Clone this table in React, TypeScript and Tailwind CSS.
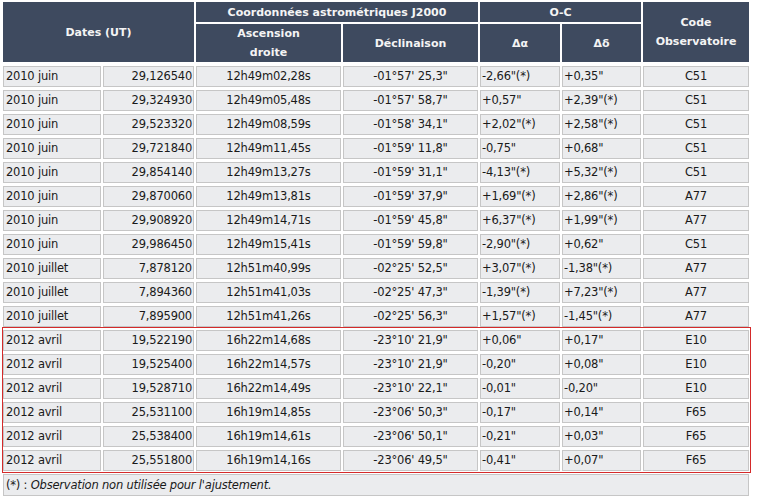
import React from "react";

const rows: string[][] = [
  ["2010 juin", "29,126540", "12h49m02,28s", "-01°57' 25,3\"", "-2,66\"(*)", "+0,35\"", "C51"],
  ["2010 juin", "29,324930", "12h49m05,48s", "-01°57' 58,7\"", "+0,57\"", "+2,39\"(*)", "C51"],
  ["2010 juin", "29,523320", "12h49m08,59s", "-01°58' 34,1\"", "+2,02\"(*)", "+2,58\"(*)", "C51"],
  ["2010 juin", "29,721840", "12h49m11,45s", "-01°59' 11,8\"", "-0,75\"", "+0,68\"", "C51"],
  ["2010 juin", "29,854140", "12h49m13,27s", "-01°59' 31,1\"", "-4,13\"(*)", "+5,32\"(*)", "C51"],
  ["2010 juin", "29,870060", "12h49m13,81s", "-01°59' 37,9\"", "+1,69\"(*)", "+2,86\"(*)", "A77"],
  ["2010 juin", "29,908920", "12h49m14,71s", "-01°59' 45,8\"", "+6,37\"(*)", "+1,99\"(*)", "A77"],
  ["2010 juin", "29,986450", "12h49m15,41s", "-01°59' 59,8\"", "-2,90\"(*)", "+0,62\"", "C51"],
  ["2010 juillet", "7,878120", "12h51m40,99s", "-02°25' 52,5\"", "+3,07\"(*)", "-1,38\"(*)", "A77"],
  ["2010 juillet", "7,894360", "12h51m41,03s", "-02°25' 47,3\"", "-1,39\"(*)", "+7,23\"(*)", "A77"],
  ["2010 juillet", "7,895900", "12h51m41,26s", "-02°25' 56,3\"", "+1,57\"(*)", "-1,45\"(*)", "A77"],
];

const rows2: string[][] = [
  ["2012 avril", "19,522190", "16h22m14,68s", "-23°10' 21,9\"", "+0,06\"", "+0,17\"", "E10"],
  ["2012 avril", "19,525400", "16h22m14,57s", "-23°10' 21,9\"", "-0,20\"", "+0,08\"", "E10"],
  ["2012 avril", "19,528710", "16h22m14,49s", "-23°10' 22,1\"", "-0,01\"", "-0,20\"", "E10"],
  ["2012 avril", "25,531100", "16h19m14,85s", "-23°06' 50,3\"", "-0,17\"", "+0,14\"", "F65"],
  ["2012 avril", "25,538400", "16h19m14,61s", "-23°06' 50,1\"", "-0,21\"", "+0,03\"", "F65"],
  ["2012 avril", "25,551800", "16h19m14,16s", "-23°06' 49,5\"", "-0,41\"", "+0,07\"", "F65"],
];

const cols = "grid grid-cols-[98px_91px_145px_135px_80px_79px_106px] gap-x-[2px]";
const cell = "h-[21px] border border-[#c6c6c6] bg-[#ebecee] text-[11.5px] leading-[19px] text-[#1a1a1a] whitespace-nowrap tracking-[-0.2px]";
const aligns = [
  "text-left pl-[2px]",
  "text-right pr-[1px]",
  "text-center",
  "text-center",
  "text-left pl-[1px]",
  "text-left pl-[1px]",
  "text-center",
];

function Row({ r }: { r: string[] }) {
  return (
    <div className={cols}>
      {r.map((v, i) => (
        <div key={i} className={`${cell} ${aligns[i]}`}>
          {v}
        </div>
      ))}
    </div>
  );
}

const hd = "bg-[#3e4a5f] text-[#f4f4f4] font-bold text-[11px] leading-[19px] flex items-center justify-center text-center";

export default function App() {
  return (
    <div
      className="bg-white w-[761px] h-[502px] pl-[3px] pt-[2px]"
      style={{ fontFamily: '"DejaVu Sans", Verdana, sans-serif' }}
    >
      <div className="w-[746px] flex flex-col">
        <div className={`${cols} grid-rows-[20px_38px] gap-y-[2px] mb-[4px]`}>
          <div className={`${hd} col-span-2 row-span-2`}>Dates (UT)</div>
          <div className={`${hd} col-span-2`}>Coordonnées astrométriques J2000</div>
          <div className={`${hd} col-span-2`}>O-C</div>
          <div className={`${hd} row-span-2`}>
            Code
            <br />
            Observatoire
          </div>
          <div className={hd}>
            Ascension
            <br />
            droite
          </div>
          <div className={hd}>Déclinaison</div>
          <div className={hd}>Δα</div>
          <div className={hd}>Δδ</div>
        </div>
        <div className="flex flex-col gap-y-[3px]">
          {rows.map((r, i) => (
            <Row key={i} r={r} />
          ))}
          <div className="-ml-px -mr-[2px] pr-px -mt-[3px] -mb-[2px] pt-[2px] pb-px border border-[#d42a2a] flex flex-col gap-y-[3px]">
            {rows2.map((r, i) => (
              <Row key={i} r={r} />
            ))}
          </div>
          <div className="h-[22px] border border-[#c6c6c6] bg-[#ebecee] text-[11.5px] leading-[20px] text-[#1a1a1a] pl-[2px] whitespace-nowrap tracking-[-0.2px]">
            (*) : <span className="italic">Observation non utilisée pour l'ajustement.</span>
          </div>
        </div>
      </div>
    </div>
  );
}
